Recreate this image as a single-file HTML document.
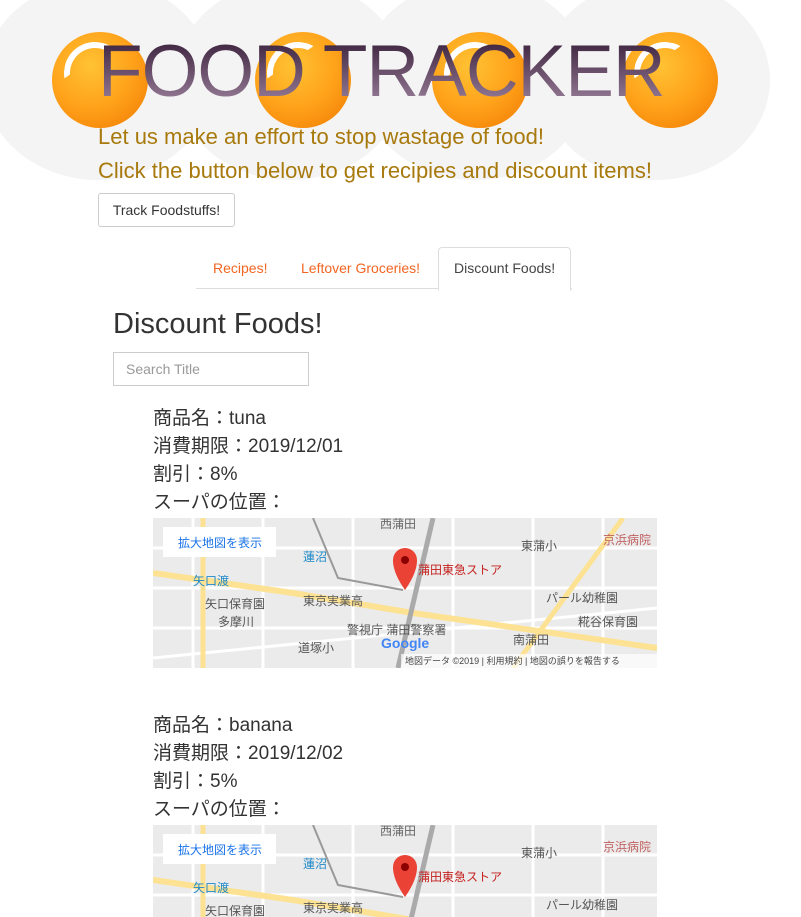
<!DOCTYPE html>
<html><head><meta charset="utf-8"><style>
body{margin:0;width:801px;height:917px;overflow:hidden;background:#fff;font-family:"Liberation Sans","Noto Sans CJK JP",sans-serif;position:relative}
.abs{position:absolute}
.blob{position:absolute;background:#f4f4f4;border-radius:50%;width:230px;height:200px;top:-20px}
.ball{position:absolute;width:96px;height:96px;border-radius:50%;background:radial-gradient(circle at 40% 35%,#ffc233 0%,#ffa21a 50%,#f07800 100%)}
.ball:after{content:"";position:absolute;left:12px;top:10px;width:50px;height:50px;border-radius:50%;border-top:6px solid #fff;border-left:6px solid #fff;border-right:6px solid transparent;border-bottom:6px solid transparent;transform:rotate(10deg);clip-path:polygon(0 0,70% 0,70% 0,0 70%)}
.title{position:absolute;left:98px;top:30px;font-size:73px;letter-spacing:-1px;white-space:nowrap;background:linear-gradient(#2e1530,#a58aa5);-webkit-background-clip:text;background-clip:text;color:transparent}
.sub{position:absolute;left:98px;font-size:22px;color:#a8790c;white-space:nowrap}
.btn{position:absolute;left:98px;top:193px;width:135px;height:32px;border:1px solid #ccc;border-radius:3px;font-size:14px;color:#333;text-align:center;line-height:32px}
.tab{position:absolute;top:260px;font-size:14px;color:#f26522}
.item{position:absolute;left:153px;font-size:19px;color:#333;line-height:28px}
</style></head><body>
<div class="blob" style="left:-17px"></div>
<div class="blob" style="left:175px"></div>
<div class="blob" style="left:360px"></div>
<div class="blob" style="left:540px"></div>
<div class="ball" style="left:52px;top:32px"></div>
<div class="ball" style="left:255px;top:32px"></div>
<div class="ball" style="left:432px;top:32px"></div>
<div class="ball" style="left:622px;top:32px"></div>
<div class="title">FOOD TRACKER</div>
<div class="sub" style="top:124px">Let us make an effort to stop wastage of food!</div>
<div class="sub" style="top:158px">Click the button below to get recipies and discount items!</div>
<div class="btn">Track Foodstuffs!</div>
<div class="abs" style="left:196px;top:288px;width:376px;height:1px;background:#ddd"></div>
<div class="abs" style="left:438px;top:247px;width:131px;height:42px;border:1px solid #ddd;border-bottom:1px solid #fff;border-radius:4px 4px 0 0;background:#fff"></div>
<div class="tab" style="left:213px">Recipes!</div>
<div class="tab" style="left:301px">Leftover Groceries!</div>
<div class="tab" style="left:454px;color:#444">Discount Foods!</div>
<div class="abs" style="left:113px;top:308px;font-size:29px;color:#333">Discount Foods!</div>
<div class="abs" style="left:113px;top:352px;width:194px;height:32px;border:1px solid #ccc;font-size:14px;color:#999;line-height:32px;text-indent:12px">Search Title</div>

<div class="item" style="top:405px">商品名：tuna<br>消費期限：2019/12/01<br>割引：8%<br>スーパの位置：</div>
<div class="item" style="top:712px">商品名：banana<br>消費期限：2019/12/02<br>割引：5%<br>スーパの位置：</div>

<svg class="abs" style="left:153px;top:518px" width="504" height="150">
<rect width="504" height="150" fill="#ebebeb"/>
<g stroke="#fff" stroke-width="3" fill="none">
<path d="M0 30H504M0 70H504M0 110H504M40 0V150M110 0V150M200 0V150M300 0V150M380 0V150M450 0V150M0 140L504 90"/>
</g>
<path d="M0 55L140 75 L260 95 L504 130" stroke="#fde293" stroke-width="6" fill="none"/>
<path d="M50 0V150M360 150L470 0" stroke="#fde293" stroke-width="5" fill="none"/>
<path d="M160 0L185 60L250 72" stroke="#999" stroke-width="2" fill="none"/>
<path d="M280 0L245 150" stroke="#aaa" stroke-width="5" fill="none"/>
<rect x="10" y="9" width="113" height="30" fill="#fff"/>
<text x="25" y="29" font-size="12" fill="#1a73e8">拡大地図を表示</text>
<text x="227" y="10" font-size="12" fill="#666">西蒲田</text>
<text x="150" y="43" font-size="12" fill="#1e88c8">蓮沼</text>
<text x="40" y="67" font-size="12" fill="#1e88c8">矢口渡</text>
<text x="52" y="90" font-size="12" fill="#555">矢口保育園</text>
<text x="150" y="87" font-size="12" fill="#555">東京実業高</text>
<text x="194" y="116" font-size="12" fill="#555">警視庁 蒲田警察署</text>
<text x="368" y="32" font-size="12" fill="#555">東蒲小</text>
<text x="450" y="26" font-size="12" fill="#c06060">京浜病院</text>
<text x="393" y="84" font-size="12" fill="#555">パール幼稚園</text>
<text x="425" y="108" font-size="12" fill="#555">糀谷保育園</text>
<text x="360" y="126" font-size="12" fill="#555">南蒲田</text>
<text x="145" y="134" font-size="12" fill="#555">道塚小</text>
<text x="65" y="108" font-size="12" fill="#555">多摩川</text>
<text x="265" y="56" font-size="12" fill="#c5221f">蒲田東急ストア</text>
<text x="228" y="130" font-size="14" font-weight="bold" fill="#4285f4">Google</text>
<path d="M252 72 C240 55 240 45 240 42 A12 12 0 1 1 264 42 C264 45 264 55 252 72Z" fill="#ea4335"/>
<circle cx="252" cy="42" r="4" fill="#8b0000"/>
<rect x="248" y="136" width="256" height="14" fill="rgba(255,255,255,.7)"/>
<text x="252" y="146" font-size="9" fill="#444">地図データ ©2019 | 利用規約 | 地図の誤りを報告する</text>
</svg>
<svg class="abs" style="left:153px;top:825px" width="504" height="92">
<rect width="504" height="150" fill="#ebebeb"/>
<g stroke="#fff" stroke-width="3" fill="none">
<path d="M0 30H504M0 70H504M40 0V150M110 0V150M200 0V150M300 0V150M380 0V150M450 0V150"/>
</g>
<path d="M0 55L140 75 L260 95 L504 130" stroke="#fde293" stroke-width="6" fill="none"/>
<path d="M50 0V150" stroke="#fde293" stroke-width="5" fill="none"/>
<path d="M160 0L185 60L250 72" stroke="#999" stroke-width="2" fill="none"/>
<path d="M280 0L245 150" stroke="#aaa" stroke-width="5" fill="none"/>
<rect x="10" y="9" width="113" height="30" fill="#fff"/>
<text x="25" y="29" font-size="12" fill="#1a73e8">拡大地図を表示</text>
<text x="227" y="10" font-size="12" fill="#666">西蒲田</text>
<text x="150" y="43" font-size="12" fill="#1e88c8">蓮沼</text>
<text x="40" y="67" font-size="12" fill="#1e88c8">矢口渡</text>
<text x="52" y="90" font-size="12" fill="#555">矢口保育園</text>
<text x="150" y="87" font-size="12" fill="#555">東京実業高</text>
<text x="368" y="32" font-size="12" fill="#555">東蒲小</text>
<text x="450" y="26" font-size="12" fill="#c06060">京浜病院</text>
<text x="393" y="84" font-size="12" fill="#555">パール幼稚園</text>
<text x="265" y="56" font-size="12" fill="#c5221f">蒲田東急ストア</text>
<path d="M252 72 C240 55 240 45 240 42 A12 12 0 1 1 264 42 C264 45 264 55 252 72Z" fill="#ea4335"/>
<circle cx="252" cy="42" r="4" fill="#8b0000"/>
</svg>
</body></html>
